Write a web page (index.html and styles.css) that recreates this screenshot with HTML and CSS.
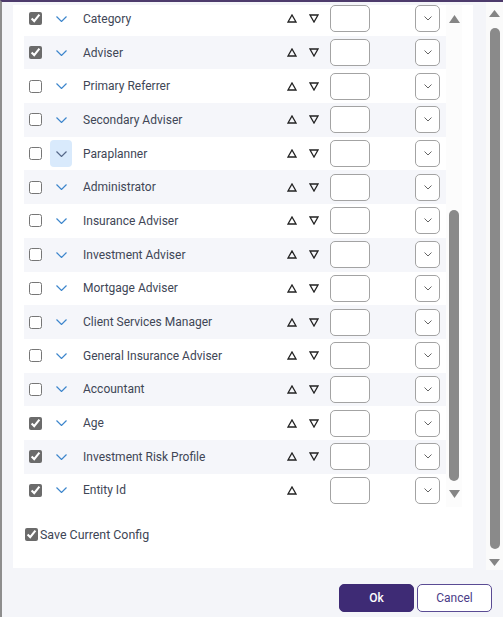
FILE: index.html
```html
<!DOCTYPE html>
<html>
<head>
<meta charset="utf-8">
<link rel="stylesheet" href="styles.css">
</head>
<body>
<div class="dialog">
  <div class="scrollarea">
    <div class="content">
      <div class="panel">
        <div class="list-wrap">
          <div class="list">
            <div class="rows">
              <div class="row"><input type="checkbox" class="cb" checked><span class="chev"><svg width="11" height="6" viewBox="0 0 11 6"><polyline points="0.5,0.5 5.5,5.5 10.5,0.5"/></svg></span><span class="label">Category</span><svg class="tri" width="10" height="9" viewBox="0 0 10 9"><polygon points="1,8 5,1 9,8"/></svg><svg class="tri down" width="10" height="9" viewBox="0 0 10 9"><polygon points="1,1 9,1 5,8"/></svg><span class="box"></span><span class="dd"><svg width="8" height="5" viewBox="0 0 8 5"><polyline points="0.5,0.5 4,4 7.5,0.5"/></svg></span></div>
              <div class="row alt"><input type="checkbox" class="cb" checked><span class="chev"><svg width="11" height="6" viewBox="0 0 11 6"><polyline points="0.5,0.5 5.5,5.5 10.5,0.5"/></svg></span><span class="label">Adviser</span><svg class="tri" width="10" height="9" viewBox="0 0 10 9"><polygon points="1,8 5,1 9,8"/></svg><svg class="tri down" width="10" height="9" viewBox="0 0 10 9"><polygon points="1,1 9,1 5,8"/></svg><span class="box"></span><span class="dd"><svg width="8" height="5" viewBox="0 0 8 5"><polyline points="0.5,0.5 4,4 7.5,0.5"/></svg></span></div>
              <div class="row"><input type="checkbox" class="cb"><span class="chev"><svg width="11" height="6" viewBox="0 0 11 6"><polyline points="0.5,0.5 5.5,5.5 10.5,0.5"/></svg></span><span class="label">Primary Referrer</span><svg class="tri" width="10" height="9" viewBox="0 0 10 9"><polygon points="1,8 5,1 9,8"/></svg><svg class="tri down" width="10" height="9" viewBox="0 0 10 9"><polygon points="1,1 9,1 5,8"/></svg><span class="box"></span><span class="dd"><svg width="8" height="5" viewBox="0 0 8 5"><polyline points="0.5,0.5 4,4 7.5,0.5"/></svg></span></div>
              <div class="row alt"><input type="checkbox" class="cb"><span class="chev"><svg width="11" height="6" viewBox="0 0 11 6"><polyline points="0.5,0.5 5.5,5.5 10.5,0.5"/></svg></span><span class="label">Secondary Adviser</span><svg class="tri" width="10" height="9" viewBox="0 0 10 9"><polygon points="1,8 5,1 9,8"/></svg><svg class="tri down" width="10" height="9" viewBox="0 0 10 9"><polygon points="1,1 9,1 5,8"/></svg><span class="box"></span><span class="dd"><svg width="8" height="5" viewBox="0 0 8 5"><polyline points="0.5,0.5 4,4 7.5,0.5"/></svg></span></div>
              <div class="row"><input type="checkbox" class="cb"><span class="chev active"><svg width="11" height="6" viewBox="0 0 11 6"><polyline points="0.5,0.5 5.5,5.5 10.5,0.5"/></svg></span><span class="label">Paraplanner</span><svg class="tri" width="10" height="9" viewBox="0 0 10 9"><polygon points="1,8 5,1 9,8"/></svg><svg class="tri down" width="10" height="9" viewBox="0 0 10 9"><polygon points="1,1 9,1 5,8"/></svg><span class="box"></span><span class="dd"><svg width="8" height="5" viewBox="0 0 8 5"><polyline points="0.5,0.5 4,4 7.5,0.5"/></svg></span></div>
              <div class="row alt"><input type="checkbox" class="cb"><span class="chev"><svg width="11" height="6" viewBox="0 0 11 6"><polyline points="0.5,0.5 5.5,5.5 10.5,0.5"/></svg></span><span class="label">Administrator</span><svg class="tri" width="10" height="9" viewBox="0 0 10 9"><polygon points="1,8 5,1 9,8"/></svg><svg class="tri down" width="10" height="9" viewBox="0 0 10 9"><polygon points="1,1 9,1 5,8"/></svg><span class="box"></span><span class="dd"><svg width="8" height="5" viewBox="0 0 8 5"><polyline points="0.5,0.5 4,4 7.5,0.5"/></svg></span></div>
              <div class="row"><input type="checkbox" class="cb"><span class="chev"><svg width="11" height="6" viewBox="0 0 11 6"><polyline points="0.5,0.5 5.5,5.5 10.5,0.5"/></svg></span><span class="label">Insurance Adviser</span><svg class="tri" width="10" height="9" viewBox="0 0 10 9"><polygon points="1,8 5,1 9,8"/></svg><svg class="tri down" width="10" height="9" viewBox="0 0 10 9"><polygon points="1,1 9,1 5,8"/></svg><span class="box"></span><span class="dd"><svg width="8" height="5" viewBox="0 0 8 5"><polyline points="0.5,0.5 4,4 7.5,0.5"/></svg></span></div>
              <div class="row alt"><input type="checkbox" class="cb"><span class="chev"><svg width="11" height="6" viewBox="0 0 11 6"><polyline points="0.5,0.5 5.5,5.5 10.5,0.5"/></svg></span><span class="label">Investment Adviser</span><svg class="tri" width="10" height="9" viewBox="0 0 10 9"><polygon points="1,8 5,1 9,8"/></svg><svg class="tri down" width="10" height="9" viewBox="0 0 10 9"><polygon points="1,1 9,1 5,8"/></svg><span class="box"></span><span class="dd"><svg width="8" height="5" viewBox="0 0 8 5"><polyline points="0.5,0.5 4,4 7.5,0.5"/></svg></span></div>
              <div class="row"><input type="checkbox" class="cb"><span class="chev"><svg width="11" height="6" viewBox="0 0 11 6"><polyline points="0.5,0.5 5.5,5.5 10.5,0.5"/></svg></span><span class="label">Mortgage Adviser</span><svg class="tri" width="10" height="9" viewBox="0 0 10 9"><polygon points="1,8 5,1 9,8"/></svg><svg class="tri down" width="10" height="9" viewBox="0 0 10 9"><polygon points="1,1 9,1 5,8"/></svg><span class="box"></span><span class="dd"><svg width="8" height="5" viewBox="0 0 8 5"><polyline points="0.5,0.5 4,4 7.5,0.5"/></svg></span></div>
              <div class="row alt"><input type="checkbox" class="cb"><span class="chev"><svg width="11" height="6" viewBox="0 0 11 6"><polyline points="0.5,0.5 5.5,5.5 10.5,0.5"/></svg></span><span class="label">Client Services Manager</span><svg class="tri" width="10" height="9" viewBox="0 0 10 9"><polygon points="1,8 5,1 9,8"/></svg><svg class="tri down" width="10" height="9" viewBox="0 0 10 9"><polygon points="1,1 9,1 5,8"/></svg><span class="box"></span><span class="dd"><svg width="8" height="5" viewBox="0 0 8 5"><polyline points="0.5,0.5 4,4 7.5,0.5"/></svg></span></div>
              <div class="row"><input type="checkbox" class="cb"><span class="chev"><svg width="11" height="6" viewBox="0 0 11 6"><polyline points="0.5,0.5 5.5,5.5 10.5,0.5"/></svg></span><span class="label">General Insurance Adviser</span><svg class="tri" width="10" height="9" viewBox="0 0 10 9"><polygon points="1,8 5,1 9,8"/></svg><svg class="tri down" width="10" height="9" viewBox="0 0 10 9"><polygon points="1,1 9,1 5,8"/></svg><span class="box"></span><span class="dd"><svg width="8" height="5" viewBox="0 0 8 5"><polyline points="0.5,0.5 4,4 7.5,0.5"/></svg></span></div>
              <div class="row alt"><input type="checkbox" class="cb"><span class="chev"><svg width="11" height="6" viewBox="0 0 11 6"><polyline points="0.5,0.5 5.5,5.5 10.5,0.5"/></svg></span><span class="label">Accountant</span><svg class="tri" width="10" height="9" viewBox="0 0 10 9"><polygon points="1,8 5,1 9,8"/></svg><svg class="tri down" width="10" height="9" viewBox="0 0 10 9"><polygon points="1,1 9,1 5,8"/></svg><span class="box"></span><span class="dd"><svg width="8" height="5" viewBox="0 0 8 5"><polyline points="0.5,0.5 4,4 7.5,0.5"/></svg></span></div>
              <div class="row"><input type="checkbox" class="cb" checked><span class="chev"><svg width="11" height="6" viewBox="0 0 11 6"><polyline points="0.5,0.5 5.5,5.5 10.5,0.5"/></svg></span><span class="label">Age</span><svg class="tri" width="10" height="9" viewBox="0 0 10 9"><polygon points="1,8 5,1 9,8"/></svg><svg class="tri down" width="10" height="9" viewBox="0 0 10 9"><polygon points="1,1 9,1 5,8"/></svg><span class="box"></span><span class="dd"><svg width="8" height="5" viewBox="0 0 8 5"><polyline points="0.5,0.5 4,4 7.5,0.5"/></svg></span></div>
              <div class="row alt"><input type="checkbox" class="cb" checked><span class="chev"><svg width="11" height="6" viewBox="0 0 11 6"><polyline points="0.5,0.5 5.5,5.5 10.5,0.5"/></svg></span><span class="label">Investment Risk Profile</span><svg class="tri" width="10" height="9" viewBox="0 0 10 9"><polygon points="1,8 5,1 9,8"/></svg><svg class="tri down" width="10" height="9" viewBox="0 0 10 9"><polygon points="1,1 9,1 5,8"/></svg><span class="box"></span><span class="dd"><svg width="8" height="5" viewBox="0 0 8 5"><polyline points="0.5,0.5 4,4 7.5,0.5"/></svg></span></div>
              <div class="row"><input type="checkbox" class="cb" checked><span class="chev"><svg width="11" height="6" viewBox="0 0 11 6"><polyline points="0.5,0.5 5.5,5.5 10.5,0.5"/></svg></span><span class="label">Entity Id</span><svg class="tri" width="10" height="9" viewBox="0 0 10 9"><polygon points="1,8 5,1 9,8"/></svg><span class="tri down"></span><span class="box"></span><span class="dd"><svg width="8" height="5" viewBox="0 0 8 5"><polyline points="0.5,0.5 4,4 7.5,0.5"/></svg></span></div>
            </div>
          </div>
          <div class="inner-sb">
            <svg class="sb-arrow" width="11" height="8" viewBox="0 0 11 8"><polygon points="0,8 5.5,0 11,8"/></svg>
            <div class="sb-space"></div>
            <div class="sb-thumb inner-thumb"></div>
            <svg class="sb-arrow bottom" width="11" height="8" viewBox="0 0 11 8"><polygon points="0,0 11,0 5.5,8"/></svg>
          </div>
        </div>
        <label class="save"><input type="checkbox" class="cb save-cb" checked>Save Current Config</label>
      </div>
    </div>
    <div class="outer-sb">
      <svg class="sb-arrow" width="11" height="7" viewBox="0 0 11 7"><polygon points="0,7 5.5,0 11,7"/></svg>
      <div class="sb-thumb outer-thumb"></div>
      <svg class="sb-arrow bottom" width="11" height="7" viewBox="0 0 11 7"><polygon points="0,0 11,0 5.5,7"/></svg>
    </div>
  </div>
  <div class="footer">
    <button class="btn ok">Ok</button>
    <button class="btn cancel">Cancel</button>
  </div>
</div>
</body>
</html>
```

FILE: styles.css
```css
html, body {
  margin: 0;
  padding: 0;
}
body {
  width: 503px;
  height: 617px;
  overflow: hidden;
  font-family: Roboto, "Liberation Sans", sans-serif;
  font-size: 12px;
  color: #404656;
}
.dialog {
  box-sizing: border-box;
  width: 503px;
  height: 617px;
  border-top: 2px solid #4d3b6c;
  border-left: 2px solid #8e8e8e;
  background: #f4f5f9;
  display: flex;
  flex-direction: column;
}
.scrollarea {
  height: 568px;
  display: flex;
  flex: none;
}
.content {
  flex: 1;
  padding: 3px 0 0 11px;
}
.panel {
  width: 460px;
  height: 563px;
  background: #ffffff;
  padding-left: 11px;
  box-sizing: border-box;
}
.list-wrap {
  display: flex;
  height: 502px;
}
.list {
  width: 422px;
  height: 502px;
  overflow: hidden;
}
.rows {
  margin-top: -3px;
}
.row {
  display: flex;
  align-items: center;
  height: 33.7px;
  padding: 0 6px 0 5px;
}
.row.alt {
  background: #f5f6fa;
}
.cb {
  width: 13px;
  height: 13px;
  margin: 0;
  accent-color: #6b6b6b;
  flex: none;
}
.chev {
  width: 22px;
  height: 27px;
  margin-left: 8px;
  border-radius: 4px;
  display: flex;
  align-items: center;
  justify-content: center;
  flex: none;
}
.chev svg polyline {
  fill: none;
  stroke: #3d86cc;
  stroke-width: 1.2;
}
.chev.active {
  background: #d9eafc;
}
.chev.active svg polyline {
  stroke: #56698a;
}
.label {
  flex: 1;
  margin-left: 11px;
  white-space: nowrap;
}
.tri {
  width: 10px;
  height: 9px;
  flex: none;
}
.tri polygon {
  fill: none;
  stroke: #222;
  stroke-width: 1.3;
  stroke-linejoin: miter;
}
.tri.down {
  margin-left: 12px;
}
.box {
  width: 40px;
  height: 27px;
  margin-left: 11px;
  box-sizing: border-box;
  border: 1px solid #a3a3a3;
  border-radius: 5px;
  background: #fff;
  flex: none;
}
.dd {
  width: 25px;
  height: 27px;
  margin-left: 45px;
  box-sizing: border-box;
  border: 1px solid #a3a3a3;
  border-radius: 5px;
  background: #fff;
  display: flex;
  align-items: center;
  justify-content: center;
  flex: none;
}
.dd svg polyline {
  fill: none;
  stroke: #666;
  stroke-width: 1;
}
.inner-sb {
  width: 16px;
  background: #fcfcfc;
  display: flex;
  flex-direction: column;
  align-items: center;
  padding: 10px 0 9px;
  box-sizing: border-box;
}
.sb-arrow polygon {
  fill: #858585;
}
.sb-space {
  flex: 1;
}
.sb-thumb {
  width: 10px;
  border-radius: 5px;
  background: #8a8a8a;
}
.inner-thumb {
  height: 271px;
  margin-bottom: 9px;
}
.sb-arrow.bottom {
  flex: none;
}
.save {
  display: flex;
  align-items: center;
  margin-top: 20px;
  padding-left: 1px;
  gap: 2px;
  font-size: 12.4px;
  line-height: 16px;
}
.save-cb {
  margin-top: -1px;
}
.outer-sb {
  width: 17px;
  background: #fafafa;
  display: flex;
  flex-direction: column;
  align-items: center;
  padding: 8px 0 4px;
  box-sizing: border-box;
  flex: none;
}
.outer-thumb {
  flex: 1;
  margin: 11px 0 10px;
}
.footer {
  display: flex;
  justify-content: flex-end;
  gap: 3px;
  padding: 14px 11px 0 0;
}
.btn {
  width: 75px;
  height: 28px;
  border-radius: 5px;
  font-family: Roboto, "Liberation Sans", sans-serif;
  font-size: 12px;
  font-weight: 500;
  cursor: pointer;
  box-sizing: border-box;
}
.ok {
  background: #3e2b75;
  color: #fff;
  border: 1px solid #3e2b75;
}
.cancel {
  background: #fff;
  color: #4a3c88;
  border: 1px solid #5a4b94;
  font-weight: 400;
}
```
